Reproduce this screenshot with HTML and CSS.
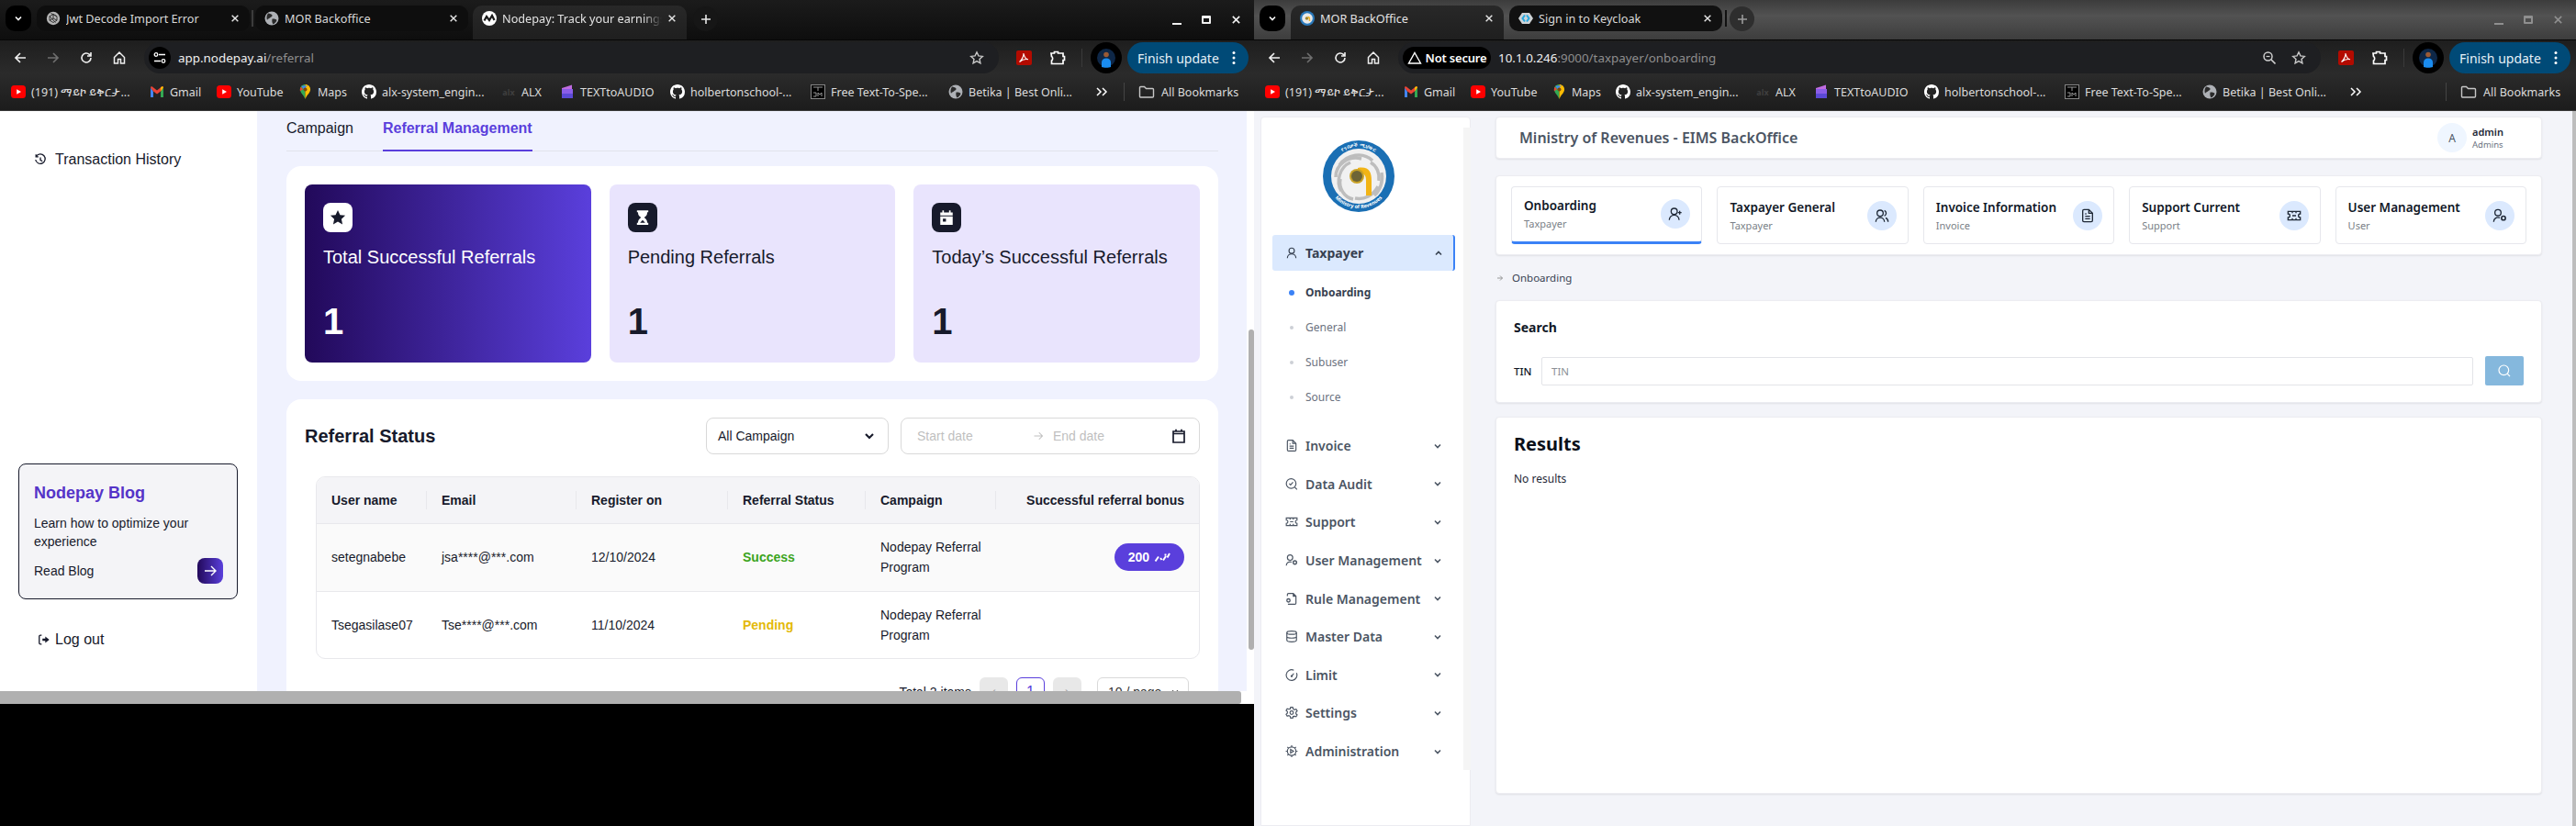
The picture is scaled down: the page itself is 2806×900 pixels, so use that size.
FILE: index.html
```html
<!DOCTYPE html>
<html lang="en">
<head>
<meta charset="utf-8">
<title>Desktop with two browser windows</title>
<link rel="stylesheet" href="styles.css">
</head>
<body>
<svg class="defs" width="0" height="0" aria-hidden="true">
  <symbol id="i-x" viewBox="0 0 12 12"><path d="M2 2l8 8M10 2l-8 8" fill="none" stroke="currentColor" stroke-width="1.7"/></symbol>
  <symbol id="i-chev" viewBox="0 0 12 12"><path d="M3 4.5L6 7.5L9 4.5" fill="none" stroke="currentColor" stroke-width="1.6"/></symbol>
  <symbol id="i-plus" viewBox="0 0 12 12"><path d="M6 1v10M1 6h10" fill="none" stroke="currentColor" stroke-width="1.6"/></symbol>
  <symbol id="i-back" viewBox="0 0 16 16"><path d="M14 8H3M8 3L3 8l5 5" fill="none" stroke="currentColor" stroke-width="1.7"/></symbol>
  <symbol id="i-fwd" viewBox="0 0 16 16"><path d="M2 8h11M8 3l5 5-5 5" fill="none" stroke="currentColor" stroke-width="1.7"/></symbol>
  <symbol id="i-reload" viewBox="0 0 16 16"><path d="M13 8a5 5 0 1 1-1.6-3.7L13 6M13 2v4H9" fill="none" stroke="currentColor" stroke-width="1.6"/></symbol>
  <symbol id="i-home" viewBox="0 0 16 16"><path d="M2.5 7.5L8 2l5.500 5.500V14H9.500V9.500h-3V14H2.500z" fill="none" stroke="currentColor" stroke-width="1.5"/></symbol>
  <symbol id="i-star" viewBox="0 0 16 16"><path d="M8 1.800l1.900 4.100 4.400.500-3.300 3 .9 4.400L8 11.600l-3.900 2.200.9-4.400-3.300-3 4.400-.5z" fill="none" stroke="currentColor" stroke-width="1.400"/></symbol>
  <symbol id="i-tune" viewBox="0 0 16 16"><path d="M7 4.500h7M2 11.500h7" fill="none" stroke="currentColor" stroke-width="1.500"/><circle cx="4" cy="4.500" r="1.800" fill="none" stroke="currentColor" stroke-width="1.300"/><circle cx="12" cy="11.500" r="1.800" fill="none" stroke="currentColor" stroke-width="1.300"/></symbol>
  <symbol id="i-pdf" viewBox="0 0 17 16"><rect width="17" height="16" rx="2" fill="#b30b00"/><path d="M8 3c.2 2.800-1.800 6.800-4.500 9.500 2.500-2.200 6.500-3.300 9.500-2.700-2.800-.6-4.600-3.800-5-6.800z" fill="none" stroke="#fff" stroke-width="1.100"/></symbol>
  <symbol id="i-ext" viewBox="0 0 18 16"><path d="M2 3h3.500V1.500h4V3H15v3.500h1.500v4H15V14.500H2.500V11c1.500-.5 1.500-4 0-4.500z" fill="none" stroke="#fff" stroke-width="1.700"/></symbol>
  <symbol id="i-avatar" viewBox="0 0 34 34"><circle cx="17" cy="17" r="17" fill="#000"/><circle cx="17" cy="17" r="10" fill="#0e2747"/><circle cx="17" cy="13.500" r="2.800" fill="#9a5a35"/><path d="M12 27v-5c0-3 2-4.500 5-4.500s5 1.500 5 4.500v5c-2 1-8 1-10 0z" fill="#1a8cf0"/></symbol>
  <symbol id="i-dots" viewBox="0 0 4 16"><circle cx="2" cy="2.500" r="1.500" fill="#fff"/><circle cx="2" cy="8" r="1.500" fill="#fff"/><circle cx="2" cy="13.500" r="1.500" fill="#fff"/></symbol>
  <symbol id="i-warn" viewBox="0 0 16 16"><path d="M8 2.500L14.500 14h-13z" fill="none" stroke="#fff" stroke-width="1.400"/></symbol>
  <symbol id="i-zoom" viewBox="0 0 16 16"><circle cx="6.500" cy="6.500" r="4.500" fill="none" stroke="#cfcfcf" stroke-width="1.500"/><path d="M10 10l4.500 4.500" stroke="#cfcfcf" stroke-width="1.700"/><path d="M4.500 6.500h4" stroke="#cfcfcf" stroke-width="1.200"/></symbol>
  <symbol id="i-globe" viewBox="0 0 16 16"><circle cx="8" cy="8" r="7.500" fill="#aeb1b6"/><path d="M4 2.500c2 .5 4 .5 4.500 2s-1.500 2-2.500 3-2.500.5-3 2.500c-1-2.500-.5-5.500 1-7.500zM9.500 8.500c2 0 3.500.5 4 1.500-.5 2-2.500 4-4 4.500-1-1.500-1.500-3.500-1-6z" fill="#2a2a2a"/></symbol>
  <symbol id="i-openai" viewBox="0 0 16 16"><circle cx="8" cy="8" r="7.200" fill="#b4b4b4"/><path d="M8 3.500l4 2.300v4.400l-4 2.300-4-2.300V5.800zM8 3.500v4.500l4 2.200M8 8l-4 2.200M5.500 2.500l6.500 3.300M4 5.800l6.500 6.700" fill="none" stroke="#2a2a2a" stroke-width=".9"/></symbol>
  <symbol id="i-node" viewBox="0 0 16 16"><circle cx="8" cy="8" r="8" fill="#fff"/><path d="M2.500 10.500L5 6l3 4 3-5 2.500 5" fill="none" stroke="#1a1a1a" stroke-width="2.200"/></symbol>
  <symbol id="i-moricon" viewBox="0 0 16 16"><circle cx="8" cy="8" r="8" fill="#2a79bb"/><circle cx="8" cy="8" r="5.800" fill="#e9e9e9"/><circle cx="7.500" cy="8" r="1.800" fill="#9c8431"/><path d="M8.500 6.500c2 0 2 1 2 4.500" fill="none" stroke="#f0b323" stroke-width="1.500"/></symbol>
  <symbol id="i-keycloak" viewBox="0 0 16 16"><path d="M4 2h8l4 6-4 6H4L0 8z" fill="#cfd3d6"/><path d="M7 4.500L4.500 8 7 11.500M9 4.500L11.500 8 9 11.500" fill="none" stroke="#27a9e0" stroke-width="2"/></symbol>
  <symbol id="i-yt" viewBox="0 0 16 16"><rect y="1" width="16" height="14" rx="3.500" fill="#f00"/><path d="M6.200 5.200v5.600L11 8z" fill="#fff"/></symbol>
  <symbol id="i-gmail" viewBox="0 0 16 16"><path d="M1 3.500V14h3V7.500z" fill="#4285f4"/><path d="M15 3.500V14h-3V7.500z" fill="#34a853"/><path d="M1 3.500c0-1 1.200-1.500 2-.9L8 6.500l5-3.900c.8-.6 2-.1 2 .9L12 7.500 8 10.500 4 7.500z" fill="#ea4335"/><path d="M12 7.500L15 3.500c0-1-1.200-1.500-2-.9L12 3.300z" fill="#fbbc04"/></symbol>
  <symbol id="i-maps" viewBox="0 0 16 20"><path d="M8 0C3.800 0 1 3 1 6.800c0 4.700 5 7.200 7 13.200z" fill="#34a853"/><path d="M8 0c4.200 0 7 3 7 6.800 0 4.700-5 7.200-7 13.200z" fill="#fbbc04"/><path d="M2 3.300L5 6.500 1 9C.6 7 1 5 2 3.300z" fill="#ea4335"/><path d="M3 2l8 0L8 4.500 5.200 5.800z" fill="#4285f4"/><circle cx="8" cy="6.800" r="2.500" fill="#7a4a10"/></symbol>
  <symbol id="i-gh" viewBox="0 0 16 16"><path fill="#fff" d="M8 0C3.580 0 0 3.580 0 8c0 3.540 2.290 6.530 5.470 7.590.4.070.55-.170.55-.380 0-.190-.010-.820-.010-1.490-2.010.370-2.530-.490-2.690-.940-.090-.230-.480-.940-.820-1.130-.280-.150-.680-.520-.010-.530.630-.010 1.080.580 1.230.820.720 1.210 1.870.870 2.330.660.070-.520.280-.870.510-1.070-1.780-.200-3.640-.890-3.640-3.950 0-.870.310-1.590.820-2.150-.080-.200-.360-1.020.080-2.120 0 0 .670-.210 2.200.820.640-.180 1.320-.270 2-.270.680 0 1.360.090 2 .27 1.530-1.040 2.200-.82 2.200-.82.440 1.100.160 1.920.080 2.120.510.560.82 1.270.82 2.150 0 3.070-1.870 3.750-3.650 3.950.290.250.540.730.540 1.480 0 1.070-.010 1.930-.010 2.200 0 .210.150.460.550.38A8.013 8.013 0 0016 8c0-4.420-3.580-8-8-8z"/></symbol>
  <symbol id="i-tta" viewBox="0 0 16 16"><path d="M2 4l11-3.500V5H2z" fill="#c06be0"/><path d="M2 5h12v5H2z" fill="#8b5de8"/><path d="M2 10h12v5H2z" fill="#5b49d6"/></symbol>
  <symbol id="i-tts" viewBox="0 0 16 16"><rect x=".5" y=".5" width="15" height="15" fill="#000" stroke="#888"/><path d="M3 3h10M8 3v4M3 9h3v4H3M8 13V9l2 2 2-2v4" fill="none" stroke="#999" stroke-width="1"/></symbol>
  <symbol id="i-folder" viewBox="0 0 18 16"><path d="M1.500 3.500a1 1 0 0 1 1-1h4l2 2h7a1 1 0 0 1 1 1v7.500a1 1 0 0 1-1 1h-13a1 1 0 0 1-1-1z" fill="none" stroke="#c7c7c7" stroke-width="1.400"/></symbol>
  <symbol id="i-more" viewBox="0 0 14 12"><path d="M2 2l4 4-4 4M8 2l4 4-4 4" fill="none" stroke="#fff" stroke-width="1.500"/></symbol>
  <symbol id="i-history" viewBox="0 0 16 16"><path d="M3 3.500A6 6 0 1 1 2 8M2.500 1.500v3h3M8 5v3.500l2.500 1.500" fill="none" stroke="currentColor" stroke-width="1.500"/></symbol>
  <symbol id="i-logout" viewBox="0 0 16 16"><path d="M5 2.500H3.500C2.700 2.500 2 3.200 2 4v8c0 .8.700 1.500 1.500 1.500H5" fill="none" stroke="currentColor" stroke-width="1.500"/><path d="M6 6.500h3.500V4l5 4-5 4V9.500H6z" fill="currentColor"/></symbol>
  <symbol id="i-solid-star" viewBox="0 0 16 16"><path d="M8 .800l2.200 4.700 5 .600-3.700 3.500 1 5L8 12.100l-4.500 2.500 1-5L.800 6.100l5-.6z" fill="currentColor"/></symbol>
  <symbol id="i-solid-hour" viewBox="0 0 16 16"><path d="M2.500 1h11v1.800h-1c0 3-1.500 4-3 5.200 1.500 1.200 3 2.200 3 5.200h1V15h-11v-1.800h1c0-3 1.500-4 3-5.200-1.500-1.200-3-2.200-3-5.200h-1z" fill="currentColor"/><path d="M5.500 13h5L8 10.500z" fill="#171a2b"/></symbol>
  <symbol id="i-solid-cal" viewBox="0 0 16 16"><path d="M4 1h1.500v2h5V1H12v2h2v12H2V3h2zM2 6v.900h12V6zM4.500 9v3h3V9z" fill="currentColor" fill-rule="evenodd"/></symbol>
  <symbol id="i-cal-line" viewBox="0 0 16 16"><path d="M2 3h12v12H2zM2 5.500h12M5 .8V3M11 .8V3" fill="none" stroke="currentColor" stroke-width="1.700"/></symbol>
  <symbol id="i-arrow" viewBox="0 0 16 16"><path d="M2 8h12M9 3l5 5-5 5" fill="none" stroke="currentColor" stroke-width="1.400"/></symbol>
  <symbol id="i-spark" viewBox="0 0 18 12"><path d="M1.500 10.500L5 5.500M7 7l1.500 2M10 9.500L13 5M14.500 6.500L17 2M11.500 3.500h2" fill="none" stroke="#fff" stroke-width="2"/></symbol>
  <symbol id="i-user" viewBox="0 0 24 24"><circle cx="12" cy="8" r="5" fill="none" stroke="currentColor" stroke-width="2"/><path d="M4 22a8 8 0 0 1 16 0" fill="none" stroke="currentColor" stroke-width="2"/></symbol>
  <symbol id="i-userplus" viewBox="0 0 24 24"><circle cx="10" cy="8" r="5" fill="none" stroke="currentColor" stroke-width="2"/><path d="M2 22a8 8 0 0 1 16 0M19 7v6M16 10h6" fill="none" stroke="currentColor" stroke-width="2"/></symbol>
  <symbol id="i-users" viewBox="0 0 24 24"><circle cx="9" cy="8" r="5" fill="none" stroke="currentColor" stroke-width="2"/><path d="M2 22a7 7 0 0 1 14 0M16 3.500a5 5 0 0 1 0 9M18 15.500a7 7 0 0 1 4 6.500" fill="none" stroke="currentColor" stroke-width="2"/></symbol>
  <symbol id="i-file" viewBox="0 0 24 24"><path d="M14 2H6a2 2 0 0 0-2 2v16a2 2 0 0 0 2 2h12a2 2 0 0 0 2-2V8zM14 2v6h6M8 13h8M8 17h8M8 9h2" fill="none" stroke="currentColor" stroke-width="2"/></symbol>
  <symbol id="i-audit" viewBox="0 0 24 24"><circle cx="11" cy="11" r="9" fill="none" stroke="currentColor" stroke-width="2"/><path d="M7.500 11l2.500 2.500 4.500-5M18 18l4 4" fill="none" stroke="currentColor" stroke-width="2"/></symbol>
  <symbol id="i-ticket" viewBox="0 0 24 24"><path d="M2 9V5h20v4a3 3 0 0 0 0 6v4H2v-4a3 3 0 0 0 0-6zM9 5v3M15 5v3M9 16v3M15 16v3M9 12h6" fill="none" stroke="currentColor" stroke-width="2"/></symbol>
  <symbol id="i-usercog" viewBox="0 0 24 24"><circle cx="9" cy="7" r="5" fill="none" stroke="currentColor" stroke-width="2"/><path d="M2 22a7 7 0 0 1 10-6.500" fill="none" stroke="currentColor" stroke-width="2"/><circle cx="18" cy="16" r="3.200" fill="none" stroke="currentColor" stroke-width="2.400"/></symbol>
  <symbol id="i-filecog" viewBox="0 0 24 24"><path d="M4 7V4a2 2 0 0 1 2-2h9l5 5v13a2 2 0 0 1-2 2H5M15 2v5h5" fill="none" stroke="currentColor" stroke-width="2"/><circle cx="6" cy="15" r="3" fill="none" stroke="currentColor" stroke-width="2.200"/></symbol>
  <symbol id="i-db" viewBox="0 0 24 24"><ellipse cx="12" cy="5" rx="9" ry="3" fill="none" stroke="currentColor" stroke-width="2"/><path d="M3 5v14c0 1.700 4 3 9 3s9-1.300 9-3V5M3 12c0 1.700 4 3 9 3s9-1.300 9-3" fill="none" stroke="currentColor" stroke-width="2"/></symbol>
  <symbol id="i-gauge" viewBox="0 0 24 24"><path d="M21 8a10 10 0 1 1-5-5" fill="none" stroke="currentColor" stroke-width="2"/><path d="M12 14l4-5" stroke="currentColor" stroke-width="2"/><circle cx="12" cy="14" r="2" fill="currentColor"/></symbol>
  <symbol id="i-gear" viewBox="0 0 24 24"><path d="M10 2h4l.7 3 2.600 1.500 3-.9 2 3.400-2.300 2.100v3l2.300 2.100-2 3.400-3-.9L14.700 19l-.7 3h-4l-.7-3-2.600-1.500-3 .9-2-3.400 2.300-2.100v-3L1.700 8l2-3.400 3 .9L9.300 5z" fill="none" stroke="currentColor" stroke-width="2"/><circle cx="12" cy="12" r="3.200" fill="none" stroke="currentColor" stroke-width="2"/></symbol>
  <symbol id="i-admin" viewBox="0 0 24 24"><circle cx="12" cy="12" r="8" fill="none" stroke="currentColor" stroke-width="2"/><path d="M12 1v3M12 20v3M1 12h3M20 12h3M4 4l2.500 2.500M17.500 17.500L20 20M20 4l-2.500 2.500M6.500 17.500L4 20" stroke="currentColor" stroke-width="2"/><path d="M10 8.500v7l5.500-3.500z" fill="none" stroke="currentColor" stroke-width="2"/></symbol>
  <symbol id="i-search" viewBox="0 0 24 24"><circle cx="11" cy="11" r="8" fill="none" stroke="currentColor" stroke-width="1.800"/><path d="M17 17l4 4" stroke="currentColor" stroke-width="1.800"/></symbol>
</svg>

<div class="desktop">
  <!-- LEFT BROWSER WINDOW -->
  <section class="window window-left">
    <header class="tabstrip">
      <div class="tab-search"><svg class="ic12"><use href="#i-chev"/></svg></div>
      <div class="tab"><svg class="ic-fav"><use href="#i-openai"/></svg><span class="tab-title">Jwt Decode Import Error</span><svg class="ic-close"><use href="#i-x"/></svg></div>
      <span class="tab-sep"></span>
      <div class="tab"><svg class="ic-fav"><use href="#i-globe"/></svg><span class="tab-title">MOR Backoffice</span><svg class="ic-close"><use href="#i-x"/></svg></div>
      <div class="tab tab-active"><svg class="ic-fav"><use href="#i-node"/></svg><span class="tab-title tab-fade">Nodepay: Track your earnings</span><svg class="ic-close"><use href="#i-x"/></svg></div>
      <div class="tab-new"><svg class="ic12"><use href="#i-plus"/></svg></div>
      <div class="win-controls">
        <span class="win-min"></span>
        <span class="win-restore"></span>
        <svg class="ic-winx"><use href="#i-x"/></svg>
      </div>
    </header>
    <div class="toolbar">
      <button class="nav-btn"><svg class="ic16"><use href="#i-back"/></svg></button>
      <button class="nav-btn nav-off"><svg class="ic16"><use href="#i-fwd"/></svg></button>
      <button class="nav-btn"><svg class="ic16"><use href="#i-reload"/></svg></button>
      <button class="nav-btn"><svg class="ic16"><use href="#i-home"/></svg></button>
      <div class="omnibox">
        <span class="site-chip"><svg class="ic16"><use href="#i-tune"/></svg></span>
        <span class="url"><b>app.nodepay.ai</b>/referral</span>
        <svg class="ic-omni-star"><use href="#i-star"/></svg>
      </div>
      <svg class="ic-pdf"><use href="#i-pdf"/></svg>
      <svg class="ic-ext"><use href="#i-ext"/></svg>
      <span class="tool-sep"></span>
      <svg class="ic-avatar"><use href="#i-avatar"/></svg>
      <div class="update-pill"><span>Finish update</span><svg class="ic-dots"><use href="#i-dots"/></svg></div>
    </div>
    <nav class="bookmarks">
      <a class="bm"><svg class="ic16"><use href="#i-yt"/></svg><span>(191) ማይኮ ይቅርታ...</span></a>
      <a class="bm"><svg class="ic16"><use href="#i-gmail"/></svg><span>Gmail</span></a>
      <a class="bm"><svg class="ic16"><use href="#i-yt"/></svg><span>YouTube</span></a>
      <a class="bm"><svg class="ic-maps"><use href="#i-maps"/></svg><span>Maps</span></a>
      <a class="bm"><svg class="ic16"><use href="#i-gh"/></svg><span>alx-system_engin...</span></a>
      <a class="bm"><i class="alx-mark">alx</i><span>ALX</span></a>
      <a class="bm"><svg class="ic16"><use href="#i-tta"/></svg><span>TEXTtoAUDIO</span></a>
      <a class="bm"><svg class="ic16"><use href="#i-gh"/></svg><span>holbertonschool-...</span></a>
      <a class="bm"><svg class="ic16"><use href="#i-tts"/></svg><span>Free Text-To-Spe...</span></a>
      <a class="bm"><svg class="ic16"><use href="#i-globe"/></svg><span>Betika | Best Onli...</span></a>
      <a class="bm-more"><svg class="ic-more"><use href="#i-more"/></svg></a>
      <span class="bm-sep"></span>
      <a class="bm"><svg class="ic-folder"><use href="#i-folder"/></svg><span>All Bookmarks</span></a>
    </nav>

    <div class="viewport viewport-left">
      <div class="np-row">
        <div class="np-clip">
          <aside class="np-side">
            <div class="np-history"><svg class="ic-np"><use href="#i-history"/></svg><span>Transaction History</span></div>
            <div class="np-blog">
              <h3>Nodepay Blog</h3>
              <p>Learn how to optimize your experience</p>
              <div class="np-blog-foot">
                <span>Read Blog</span>
                <span class="np-go"><svg class="ic16"><use href="#i-arrow"/></svg></span>
              </div>
            </div>
            <div class="np-logout"><svg class="ic-np"><use href="#i-logout"/></svg><span>Log out</span></div>
          </aside>
          <main class="np-main">
            <div class="np-tabs">
              <span class="np-tab">Campaign</span>
              <span class="np-tab np-tab-on">Referral Management</span>
            </div>
            <section class="np-card np-stats">
              <article class="stat stat-hero">
                <span class="stat-ic"><svg class="ic18"><use href="#i-solid-star"/></svg></span>
                <div class="stat-title">Total Successful Referrals</div>
                <div class="stat-num">1</div>
              </article>
              <article class="stat">
                <span class="stat-ic"><svg class="ic18"><use href="#i-solid-hour"/></svg></span>
                <div class="stat-title">Pending Referrals</div>
                <div class="stat-num">1</div>
              </article>
              <article class="stat">
                <span class="stat-ic"><svg class="ic18"><use href="#i-solid-cal"/></svg></span>
                <div class="stat-title">Today’s Successful Referrals</div>
                <div class="stat-num">1</div>
              </article>
            </section>
            <section class="np-card np-status">
              <div class="np-status-head">
                <h2>Referral Status</h2>
                <div class="np-select"><span>All Campaign</span><svg class="ic16"><use href="#i-chev"/></svg></div>
                <div class="np-range">
                  <span class="ph ph-start">Start date</span>
                  <svg class="ic-range-arrow"><use href="#i-arrow"/></svg>
                  <span class="ph ph-end">End date</span>
                  <svg class="ic-range-cal"><use href="#i-cal-line"/></svg>
                </div>
              </div>
              <div class="np-table-wrap">
                <table class="np-table">
                  <colgroup><col class="c1"><col class="c2"><col class="c3"><col class="c4"><col class="c5"><col class="c6"></colgroup>
                  <thead>
                    <tr><th>User name</th><th>Email</th><th>Register on</th><th>Referral Status</th><th>Campaign</th><th class="right">Successful referral bonus</th></tr>
                  </thead>
                  <tbody>
                    <tr class="row-hover">
                      <td>setegnabebe</td><td>jsa****@***.com</td><td>12/10/2024</td><td class="st-ok">Success</td><td>Nodepay Referral Program</td>
                      <td class="right"><span class="bonus">200 <svg class="ic-spark"><use href="#i-spark"/></svg></span></td>
                    </tr>
                    <tr>
                      <td>Tsegasilase07</td><td>Tse****@***.com</td><td>11/10/2024</td><td class="st-pend">Pending</td><td>Nodepay Referral Program</td><td></td>
                    </tr>
                  </tbody>
                </table>
              </div>
              <div class="np-pager">
                <span class="pg-total">Total 2 items</span>
                <span class="pg-btn pg-off">&lsaquo;</span>
                <span class="pg-btn pg-on">1</span>
                <span class="pg-btn pg-off">&rsaquo;</span>
                <span class="pg-size">10 / page <svg class="ic12"><use href="#i-chev"/></svg></span>
              </div>
            </section>
          </main>
        </div>
        <div class="vbar"><span class="vbar-thumb"></span></div>
      </div>
      <div class="hbar"><span class="hbar-thumb"></span></div>
    </div>
  </section>

  <!-- RIGHT BROWSER WINDOW -->
  <section class="window window-right">
    <header class="tabstrip tabstrip-idle">
      <div class="tab-search"><svg class="ic12"><use href="#i-chev"/></svg></div>
      <div class="tab tab-active tab-first"><svg class="ic-fav"><use href="#i-moricon"/></svg><span class="tab-title">MOR BackOffice</span><svg class="ic-close"><use href="#i-x"/></svg></div>
      <div class="tab tab-dark"><svg class="ic-fav"><use href="#i-keycloak"/></svg><span class="tab-title">Sign in to Keycloak</span><svg class="ic-close"><use href="#i-x"/></svg></div>
      <span class="tab-sep tab-sep-r"></span>
      <div class="tab-new tab-new-r"><svg class="ic12"><use href="#i-plus"/></svg></div>
      <div class="win-controls win-dim">
        <span class="win-min"></span>
        <span class="win-restore"></span>
        <svg class="ic-winx"><use href="#i-x"/></svg>
      </div>
    </header>
    <div class="toolbar">
      <button class="nav-btn"><svg class="ic16"><use href="#i-back"/></svg></button>
      <button class="nav-btn nav-off"><svg class="ic16"><use href="#i-fwd"/></svg></button>
      <button class="nav-btn"><svg class="ic16"><use href="#i-reload"/></svg></button>
      <button class="nav-btn"><svg class="ic16"><use href="#i-home"/></svg></button>
      <div class="omnibox">
        <span class="site-chip site-chip-wide"><svg class="ic16"><use href="#i-warn"/></svg><span>Not secure</span></span>
        <span class="url"><b>10.1.0.246</b>:9000/taxpayer/onboarding</span>
        <svg class="ic-omni-zoom"><use href="#i-zoom"/></svg>
        <svg class="ic-omni-star"><use href="#i-star"/></svg>
      </div>
      <svg class="ic-pdf"><use href="#i-pdf"/></svg>
      <svg class="ic-ext"><use href="#i-ext"/></svg>
      <span class="tool-sep"></span>
      <svg class="ic-avatar"><use href="#i-avatar"/></svg>
      <div class="update-pill"><span>Finish update</span><svg class="ic-dots"><use href="#i-dots"/></svg></div>
    </div>
    <nav class="bookmarks bookmarks-r">
      <a class="bm"><svg class="ic16"><use href="#i-yt"/></svg><span>(191) ማይኮ ይቅርታ...</span></a>
      <a class="bm"><svg class="ic16"><use href="#i-gmail"/></svg><span>Gmail</span></a>
      <a class="bm"><svg class="ic16"><use href="#i-yt"/></svg><span>YouTube</span></a>
      <a class="bm"><svg class="ic-maps"><use href="#i-maps"/></svg><span>Maps</span></a>
      <a class="bm"><svg class="ic16"><use href="#i-gh"/></svg><span>alx-system_engin...</span></a>
      <a class="bm"><i class="alx-mark">alx</i><span>ALX</span></a>
      <a class="bm"><svg class="ic16"><use href="#i-tta"/></svg><span>TEXTtoAUDIO</span></a>
      <a class="bm"><svg class="ic16"><use href="#i-gh"/></svg><span>holbertonschool-...</span></a>
      <a class="bm"><svg class="ic16"><use href="#i-tts"/></svg><span>Free Text-To-Spe...</span></a>
      <a class="bm"><svg class="ic16"><use href="#i-globe"/></svg><span>Betika | Best Onli...</span></a>
      <a class="bm-more"><svg class="ic-more"><use href="#i-more"/></svg></a>
      <span class="bm-sep"></span>
      <a class="bm"><svg class="ic-folder"><use href="#i-folder"/></svg><span>All Bookmarks</span></a>
    </nav>

    <div class="viewport viewport-right">
      <aside class="mor-side">
        <svg class="mor-logo" viewBox="0 0 78 78" role="img" aria-label="Ministry of Revenues logo">
          <defs>
            <path id="ring-top" d="M7 39a32 32 0 0 1 64 0"/>
            <path id="ring-bottom" d="M4 39a35 35 0 0 0 70 0"/>
          </defs>
          <circle cx="39" cy="39" r="39" fill="#1a6fb4"/>
          <circle cx="39" cy="39" r="30" fill="#f1f1f1"/>
          <g fill="none" stroke="#bdbdbd" stroke-width="3.500">
            <path d="M18 27c8-12 26-15 36-5"/>
            <path d="M14 40c0-14 14-24 28-20"/>
            <path d="M20 55c-6-10-2-26 10-31"/>
            <path d="M33 64c-10-2-16-12-14-22"/>
            <path d="M60 50c-5 10-15 15-25 13"/>
            <path d="M64 35c2 10-2 20-8 25"/>
            <path d="M52 24c7 4 10 12 9 20"/>
          </g>
          <path d="M38 30c12-2 15 4 15 14v16h-6V44c0-5-1-9-9-9z" fill="#f2b416"/>
          <circle cx="37" cy="39" r="8" fill="#c9a227"/>
          <circle cx="37" cy="39" r="6" fill="#6d6436"/>
          <text class="logo-ring" fill="#fff"><textPath href="#ring-top" startOffset="50%" text-anchor="middle">የገቢዎች ሚኒስቴር</textPath></text>
          <text class="logo-ring" fill="#fff"><textPath href="#ring-bottom" startOffset="50%" text-anchor="middle">Ministry of Revenues</textPath></text>
        </svg>
        <div class="mor-item mor-item-on"><svg class="ic-mor"><use href="#i-user"/></svg><span>Taxpayer</span><svg class="ic-mor-chev flip"><use href="#i-chev"/></svg></div>
        <ul class="mor-sub">
          <li class="on">Onboarding</li>
          <li>General</li>
          <li>Subuser</li>
          <li>Source</li>
        </ul>
        <div class="mor-item"><svg class="ic-mor"><use href="#i-file"/></svg><span>Invoice</span><svg class="ic-mor-chev"><use href="#i-chev"/></svg></div>
        <div class="mor-item"><svg class="ic-mor"><use href="#i-audit"/></svg><span>Data Audit</span><svg class="ic-mor-chev"><use href="#i-chev"/></svg></div>
        <div class="mor-item"><svg class="ic-mor"><use href="#i-ticket"/></svg><span>Support</span><svg class="ic-mor-chev"><use href="#i-chev"/></svg></div>
        <div class="mor-item"><svg class="ic-mor"><use href="#i-usercog"/></svg><span>User Management</span><svg class="ic-mor-chev"><use href="#i-chev"/></svg></div>
        <div class="mor-item"><svg class="ic-mor"><use href="#i-filecog"/></svg><span>Rule Management</span><svg class="ic-mor-chev"><use href="#i-chev"/></svg></div>
        <div class="mor-item"><svg class="ic-mor"><use href="#i-db"/></svg><span>Master Data</span><svg class="ic-mor-chev"><use href="#i-chev"/></svg></div>
        <div class="mor-item"><svg class="ic-mor"><use href="#i-gauge"/></svg><span>Limit</span><svg class="ic-mor-chev"><use href="#i-chev"/></svg></div>
        <div class="mor-item"><svg class="ic-mor"><use href="#i-gear"/></svg><span>Settings</span><svg class="ic-mor-chev"><use href="#i-chev"/></svg></div>
        <div class="mor-item"><svg class="ic-mor"><use href="#i-admin"/></svg><span>Administration</span><svg class="ic-mor-chev"><use href="#i-chev"/></svg></div>
        <span class="mor-side-track"></span>
      </aside>
      <main class="mor-main">
        <header class="mor-card mor-head">
          <h1>Ministry of Revenues - EIMS BackOffice</h1>
          <div class="mor-user">
            <span class="mor-ava">A</span>
            <div class="mor-user-text"><b>admin</b><small>Admins</small></div>
          </div>
        </header>
        <section class="mor-card mor-tabs">
          <div class="mor-tab mor-tab-on"><div><b>Onboarding</b><small>Taxpayer</small></div><span class="mor-tab-ic"><svg class="ic16"><use href="#i-userplus"/></svg></span></div>
          <div class="mor-tab"><div><b>Taxpayer General</b><small>Taxpayer</small></div><span class="mor-tab-ic"><svg class="ic16"><use href="#i-users"/></svg></span></div>
          <div class="mor-tab"><div><b>Invoice Information</b><small>Invoice</small></div><span class="mor-tab-ic"><svg class="ic16"><use href="#i-file"/></svg></span></div>
          <div class="mor-tab"><div><b>Support Current</b><small>Support</small></div><span class="mor-tab-ic"><svg class="ic16"><use href="#i-ticket"/></svg></span></div>
          <div class="mor-tab"><div><b>User Management</b><small>User</small></div><span class="mor-tab-ic"><svg class="ic16"><use href="#i-usercog"/></svg></span></div>
        </section>
        <div class="mor-crumb"><svg class="ic-crumb"><use href="#i-fwd"/></svg><span>Onboarding</span></div>
        <section class="mor-card mor-search">
          <h2>Search</h2>
          <div class="mor-search-row">
            <label>TIN</label>
            <div class="mor-input">TIN</div>
            <button class="mor-go"><svg class="ic16"><use href="#i-search"/></svg></button>
          </div>
        </section>
        <section class="mor-card mor-results">
          <h2>Results</h2>
          <p>No results</p>
        </section>
      </main>
      <div class="mor-scroll"></div>
    </div>
  </section>
</div>
</body>
</html>
```

FILE: styles.css
```css
* { box-sizing: border-box; }
html, body { margin: 0; padding: 0; background: #000; overflow: hidden; }
body { width: 2806px; height: 900px; font-family: "Liberation Sans", sans-serif; }
.defs { position: absolute; }
svg { display: block; flex: none; }
h1, h2, h3, p, ul { margin: 0; padding: 0; }
button { border: 0; background: none; padding: 0; color: inherit; }

.desktop { display: flex; align-items: flex-start; width: 2806px; height: 900px; background: #000; }
.window { display: flex; flex-direction: column; flex: none; font-family: "Noto Sans", sans-serif; }
.window-left { width: 1366px; height: 767px; }
.window-right { width: 1440px; height: 900px; }

/* icon sizes */
.ic12 { width: 12px; height: 12px; }
.ic16 { width: 16px; height: 16px; }
.ic18 { width: 18px; height: 18px; }
.ic-fav { width: 16px; height: 16px; }
.ic-close { width: 10px; height: 10px; color: #e6e6e6; }

/* tab strip */
.tabstrip { display: flex; align-items: flex-start; height: 44px; padding: 6px 0 0 6px; background: linear-gradient(#1b1b1b, #0e0e0e); border-bottom: 1px solid #060606; flex: none; }
.tabstrip-idle { background: linear-gradient(#3c3c3c, #525252 40%, #3d3d3d); }
.tab-search { width: 28px; height: 28px; margin-right: 6px; border-radius: 10px; background: #000; color: #fff; display: flex; align-items: center; justify-content: center; }
.tab { display: flex; align-items: center; gap: 6px; width: 232px; height: 28px; padding: 0 11px 0 10px; border-radius: 10px; background: #0e0e0e; color: #d8d8d8; font-size: 12.700px; flex: none; }
.tab-title { flex: 1; white-space: nowrap; overflow: hidden; }
.tab-fade { -webkit-mask-image: linear-gradient(90deg, #000 88%, transparent); mask-image: linear-gradient(90deg, #000 88%, transparent); }
.tab-sep { width: 2px; height: 18px; margin: 5px 2px 0; background: #3c3c3c; flex: none; }
.tab-active { height: 37px; margin-left: 5px; border-radius: 10px 10px 0 0; background: linear-gradient(#282828, #1f1f1f); padding-bottom: 9px; color: #e3e3e3; width: 233px; }
.tab-first { margin-left: 0; width: 232px; }
.tab-dark { margin-left: 6px; background: #111; }
.tab-sep-r { background: #111; margin: 5px 3px 0 3px; }
.tab-new { width: 27px; height: 27px; margin: 1px 0 0 7px; border-radius: 50%; background: #161616; color: #e8e8e8; display: flex; align-items: center; justify-content: center; }
.tab-new-r { background: #2e2e2e; color: #9a9a9a; margin-left: 0; }
.win-controls { display: flex; align-items: center; gap: 22px; margin-left: auto; padding: 10px 14px 0 0; color: #f0f0f0; }
.win-min { width: 10px; height: 2px; margin-top: 8px; background: currentColor; }
.win-restore { width: 10px; height: 9px; border: 2px solid currentColor; border-top-width: 3px; border-radius: 1px; }
.ic-winx { width: 11px; height: 11px; }
.win-dim { color: #8f8f8f; }

/* toolbar */
.toolbar { display: flex; align-items: center; height: 36px; padding: 2px 6px 0 4px; background: linear-gradient(#1e1e1e, #2b2b2b); color: #efefef; flex: none; }
.nav-btn { width: 36px; height: 34px; display: flex; align-items: center; justify-content: center; flex: none; }
.nav-off { color: #6e6e6e; }
.omnibox { display: flex; align-items: center; flex: 1; min-width: 0; height: 34px; margin: 0 19px 0 9px; padding: 0 16px 0 5px; border-radius: 17px; background: #1e1f22; }
.site-chip { display: flex; align-items: center; justify-content: center; width: 24px; height: 24px; border-radius: 12px; background: #000; color: #fff; flex: none; }
.site-chip-wide { width: 96px; gap: 4px; font-size: 13px; font-weight: 600; letter-spacing: -.2px; white-space: nowrap; }
.url { margin-left: 8px; font-size: 13.400px; color: #8e8e8e; white-space: nowrap; flex: 1; }
.url b { font-weight: 400; color: #f0f0f0; }
.ic-omni-star { width: 16px; height: 16px; color: #c8c8c8; }
.ic-omni-zoom { width: 16px; height: 16px; margin-right: 16px; }
.ic-pdf { width: 17px; height: 16px; margin-right: 19px; }
.ic-ext { width: 18px; height: 16px; margin-right: 17px; }
.tool-sep { width: 1px; height: 20px; margin-right: 9px; background: #3a3a3a; flex: none; }
.ic-avatar { width: 34px; height: 34px; margin-right: 6px; }
.update-pill { display: flex; align-items: center; width: 132px; height: 34px; padding: 0 14px 0 11px; border-radius: 17px; background: #004a77; color: #e6f1f8; font-size: 14px; white-space: nowrap; justify-content: space-between; flex: none; }
.ic-dots { width: 4px; height: 16px; }

/* bookmarks */
.bookmarks { display: grid; grid-template-columns: 151px 73px 90px 68px 152px 64px 120px 153px 150px 157px 34px 16px auto; align-items: center; height: 41px; padding-left: 12px; background: linear-gradient(#2b2b2b, #1c1c1c); border-bottom: 1px solid #3a3a3a; color: #dcdcdc; font-size: 12.5px; flex: none; }
.bookmarks-r { grid-template-columns: 151px 73px 90px 68px 152px 64px 120px 153px 150px 157px 108px 16px auto; }
.bm { display: flex; align-items: center; gap: 6px; white-space: nowrap; overflow: hidden; font-family: "Noto Sans", "DejaVu Sans", sans-serif; }
.ic-maps { width: 13px; height: 16px; margin-right: 1px; }
.alx-mark { width: 16px; font-size: 9px; font-style: normal; font-weight: 700; color: #3f3f3f; text-align: center; }
.bm-more { display: flex; justify-content: flex-start; padding-left: 3px; }
.ic-more { width: 14px; height: 12px; }
.bm-sep { width: 1px; height: 20px; background: #444; }
.ic-folder { width: 18px; height: 16px; margin-right: 1px; }

/* left page */
.viewport { flex: 1; min-height: 0; display: flex; background: #fff; }
.viewport-left { flex-direction: column; }
.np-row { flex: 1; min-height: 0; display: flex; }
.np-clip { flex: 1; min-width: 0; display: flex; overflow: hidden; background: #f0f2fe; font-family: "Liberation Sans", sans-serif; color: #171a2b; }
.vbar { width: 8px; background: #fff; position: relative; flex: none; }
.vbar-thumb { display: block; width: 6px; height: 349px; margin: 238px 0 0 2px; border-radius: 3px; background: #b0b0b0; }
.hbar { height: 14px; background: #fff; flex: none; }
.hbar-thumb { display: block; width: 1352px; height: 14px; border-radius: 0 3px 3px 0; background: #b0b0b0; }

.np-side { display: flex; flex-direction: column; width: 280px; padding-left: 20px; background: #fff; flex: none; }
.np-history { display: flex; align-items: center; gap: 9px; margin: 43px 0 0 17px; font-size: 16px; height: 20px; }
.ic-np { width: 14px; height: 14px; color: #171a2b; }
.np-blog { width: 239px; height: 148px; margin-top: 321px; padding: 20px 15px 0 16px; border: 1px solid #171a2b; border-radius: 8px; background: #f4f4f7; }
.np-blog h3 { font-size: 18px; line-height: 22px; font-weight: 600; color: #5534c8; }
.np-blog p { margin-top: 12px; font-size: 14px; line-height: 20px; }
.np-blog-foot { display: flex; align-items: center; justify-content: space-between; margin-top: 8px; font-size: 14px; }
.np-go { display: flex; align-items: center; justify-content: center; width: 28px; height: 28px; border-radius: 8px; background: linear-gradient(90deg, #22095a, #5a3fdc); color: #fff; }
.np-logout { display: flex; align-items: center; gap: 5px; margin: 34px 0 0 21px; font-size: 16px; height: 20px; }

.np-main { flex: 1; min-width: 0; padding: 0 31px 0 32px; }
.np-tabs { display: flex; gap: 32px; height: 44px; border-bottom: 1px solid #e2e4ec; }
.np-tab { font-size: 16px; line-height: 38px; }
.np-tab-on { height: 44px; border-bottom: 2px solid #5a3fdc; color: #5a3fdc; font-weight: 700; }
.np-card { background: #fff; border-radius: 16px; padding: 20px; }
.np-stats { display: grid; grid-template-columns: repeat(3, 1fr); gap: 20px; margin-top: 16px; }
.stat { padding: 20px; height: 194px; border-radius: 8px; background: #e9e4fd; }
.stat-hero { background: linear-gradient(90deg, #22095a, #5a3fdc); color: #fff; }
.stat-ic { display: flex; align-items: center; justify-content: center; width: 32px; height: 32px; border-radius: 8px; background: #171a2b; color: #fff; }
.stat-hero .stat-ic { background: #fff; color: #171a2b; }
.stat-title { margin-top: 15px; font-size: 20px; line-height: 24px; }
.stat-num { margin-top: 34px; font-size: 40px; line-height: 48px; font-weight: 700; }
.np-status { margin-top: 20px; padding-bottom: 0; }
.np-status-head { display: flex; align-items: center; height: 40px; }
.np-status-head h2 { flex: 1; font-size: 20px; }
.np-select { display: flex; align-items: center; justify-content: space-between; width: 199px; height: 40px; padding: 0 12px; border: 1px solid #d9d9d9; border-radius: 8px; font-size: 14px; }
.np-range { display: flex; align-items: center; width: 326px; height: 40px; margin-left: 13px; padding: 0 14px 0 17px; border: 1px solid #d9d9d9; border-radius: 8px; font-size: 14px; }
.ph { color: #bfbfbf; }
.ph-start { width: 126px; }
.ic-range-arrow { width: 12px; height: 12px; color: #bfbfbf; }
.ph-end { margin-left: 10px; flex: 1; }
.ic-range-cal { width: 16px; height: 16px; color: #171a2b; }
.np-table-wrap { margin: 24px 0 0 12px; border: 1px solid #e8e8ec; border-radius: 10px; overflow: hidden; }
.np-table { width: 100%; border-collapse: collapse; table-layout: fixed; font-size: 14px; }
.c1 { width: 120px; } .c2 { width: 163px; } .c3 { width: 165px; } .c4 { width: 150px; } .c5 { width: 142px; }
.np-table th { position: relative; height: 50px; padding: 0 16px; background: #f4f4f7; text-align: left; font-weight: 700; border-bottom: 1px solid #e8e8ec; white-space: nowrap; }
.np-table th:not(:last-child)::after { content: ""; position: absolute; right: 0; top: 15px; width: 1px; height: 20px; background: #e8e8ec; }
.np-table td { height: 73px; padding: 0 16px; line-height: 22px; }
.row-hover td { background: #fafafa; border-bottom: 1px solid #e8e8ec; height: 74px; }
.np-table .right { text-align: right; }
.st-ok { color: #3ba41c; font-weight: 700; }
.st-pend { color: #e3b90a; font-weight: 700; }
.bonus { display: inline-flex; align-items: center; gap: 5px; height: 30px; padding: 0 15px; border-radius: 15px; background: #5a3fdc; color: #fff; font-weight: 700; font-size: 14px; }
.ic-spark { width: 18px; height: 12px; }
.np-pager { display: flex; align-items: center; justify-content: flex-end; gap: 9px; height: 32px; margin-top: 20px; padding-right: 12px; font-size: 14px; }
.pg-btn { width: 31px; height: 32px; display: flex; align-items: center; justify-content: center; border-radius: 6px; font-size: 16px; }
.pg-off { background: #e8e8e8; color: #aaa; }
.pg-on { border: 1px solid #5a3fdc; color: #5a3fdc; }
.pg-size { display: flex; align-items: center; justify-content: space-between; width: 100px; height: 32px; margin-left: 8px; padding: 0 8px 0 11px; border: 1px solid #d9d9d9; border-radius: 6px; color: #333; }

/* right page */
.viewport-right { position: relative; background: #f3f4f9; font-family: "Noto Sans", sans-serif; color: #111827; padding: 6px 0 0 7px; }
.mor-side { position: relative; width: 229px; padding-top: 25px; background: #fff; border: 1px solid #ececf1; border-radius: 4px 4px 0 0; flex: none; }
.mor-logo { width: 78px; height: 78px; margin: 0 0 25px 67px; }
.logo-ring { font-size: 5.500px; font-weight: 700; font-family: "Noto Sans", "DejaVu Sans", sans-serif; }
.mor-item { display: flex; align-items: center; width: 199px; height: 41.600px; margin-left: 12px; padding: 0 13px 0 14px; font-size: 14px; font-weight: 600; color: #4b5563; }
.mor-item > span { flex: 1; margin-left: 8px; white-space: nowrap; }
.mor-item-on { height: 39px; background: #dbe9fe; border-right: 2px solid #3b82f6; border-radius: 3px; padding-right: 10px; font-weight: 700; color: #374151; }
.ic-mor { width: 14px; height: 15px; }
.ic-mor-chev { width: 12px; height: 12px; }
.flip { transform: rotate(180deg); }
.mor-sub { list-style: none; margin: 5px 0 13px 48px; }
.mor-sub li { position: relative; height: 38px; line-height: 38px; font-size: 12px; color: #6b7280; }
.mor-sub li::before { content: ""; position: absolute; left: -17px; top: 17px; width: 4px; height: 4px; border-radius: 50%; background: #cdd0d6; }
.mor-sub li.on { color: #374151; font-weight: 700; }
.mor-sub li.on::before { left: -18px; top: 16px; width: 6px; height: 6px; background: #3b82f6; }
.mor-side-track { position: absolute; left: 220px; top: 11px; bottom: 60px; width: 8px; background: #f5f5f5; }

.mor-main { display: flex; flex-direction: column; width: 1140px; margin-left: 27px; flex: none; }
.mor-card { background: #fff; border: 1px solid #ececf1; border-radius: 4px; box-shadow: 0 1px 2px rgba(0, 0, 0, .08); }
.mor-head { display: flex; align-items: center; justify-content: space-between; height: 46px; padding: 0 41px 0 25px; }
.mor-head h1 { font-size: 16px; font-weight: 600; color: #4b5563; }
.mor-user { display: flex; align-items: center; gap: 6px; }
.mor-ava { display: flex; align-items: center; justify-content: center; width: 32px; height: 32px; border-radius: 50%; background: #eff6ff; color: #4b5563; font-size: 12px; }
.mor-user-text b { display: block; font-size: 11px; line-height: 14px; font-weight: 600; color: #1f2937; }
.mor-user-text small { display: block; font-size: 9.500px; line-height: 13px; color: #6b7280; }
.mor-tabs { display: grid; grid-template-columns: repeat(5, 1fr); gap: 16px; height: 87px; margin-top: 18px; padding: 11px 16px; }
.mor-tab { display: flex; align-items: center; justify-content: space-between; padding: 0 12px 0 13px; border: 1px solid #e6e7ec; border-radius: 4px; font-size: 14px; }
.mor-tab b { display: block; line-height: 20px; font-weight: 600; color: #111827; white-space: nowrap; font-size: 13.500px; }
.mor-tab small { display: block; margin-top: 2px; font-size: 11px; line-height: 16px; color: #7a7f87; }
.mor-tab-on { border-bottom: 3px solid #3b82f6; padding-bottom: 2px; }
.mor-tab-ic { display: flex; align-items: center; justify-content: center; width: 32px; height: 32px; border-radius: 50%; background: #dbe9fe; color: #1f2937; flex: none; }
.mor-crumb { display: flex; align-items: center; gap: 9px; height: 49px; padding-left: 1px; font-size: 11.500px; color: #374151; }
.ic-crumb { width: 8px; height: 10px; color: #888; }
.mor-search { height: 112px; padding: 19px 19px; }
.mor-search h2 { font-size: 14px; line-height: 20px; font-weight: 700; }
.mor-search-row { display: flex; align-items: center; margin-top: 21px; height: 32px; }
.mor-search-row label { width: 30px; font-size: 11.500px; font-weight: 500; }
.mor-input { display: flex; align-items: center; flex: 1; height: 31px; padding-left: 10px; border: 1px solid #e3e4e8; border-radius: 2px; font-size: 11.500px; color: #8a8f96; }
.mor-go { display: flex; align-items: center; justify-content: center; width: 42px; height: 32px; margin-left: 13px; border-radius: 2px; background: #85b8dd; color: #fff; }
.mor-results { height: 411px; margin-top: 15px; padding: 17px 19px; }
.mor-results h2 { font-size: 20px; line-height: 24px; font-weight: 700; color: #0b0f19; }
.mor-results p { margin-top: 18px; font-size: 12px; line-height: 16px; color: #1f2937; }
.mor-scroll { position: absolute; right: 0; top: 0; bottom: 0; width: 4px; background: #bdbdbd; }
```
